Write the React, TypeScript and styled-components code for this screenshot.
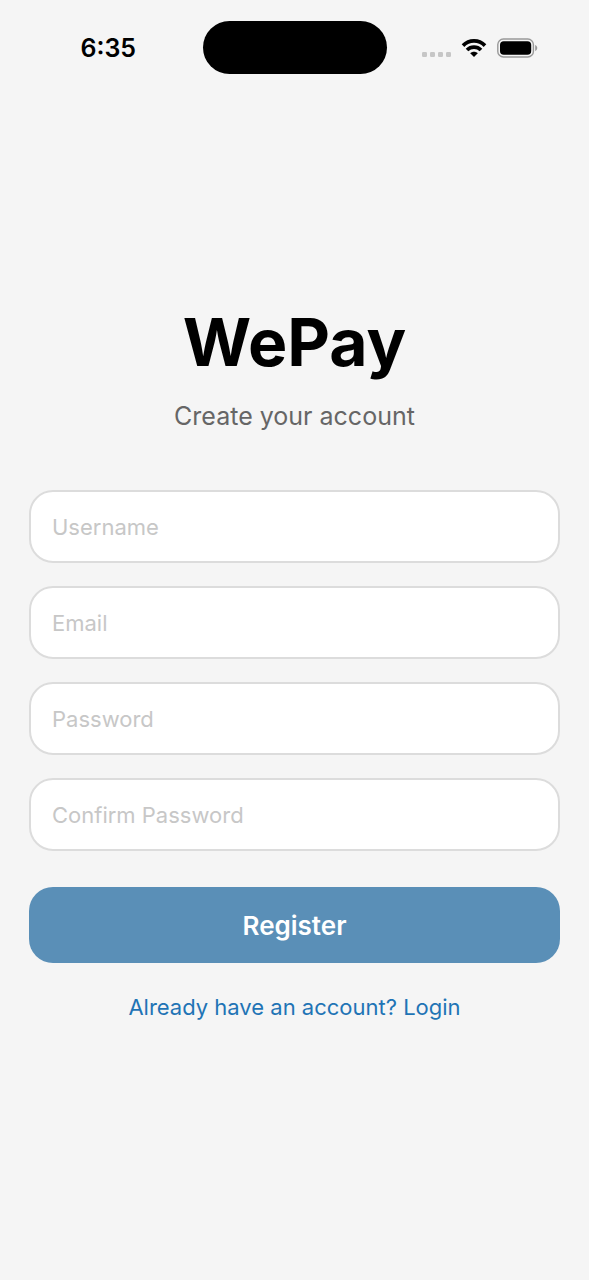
import React from 'react';
import styled, { createGlobalStyle } from 'styled-components';

const GlobalStyle = createGlobalStyle`
  *, *::before, *::after { box-sizing: border-box; }
  body {
    margin: 0;
    background: #f5f5f5;
    font-family: Inter, "Liberation Sans", sans-serif;
  }
`;

const Screen = styled.div`
  min-height: 100vh;
  display: flex;
  flex-direction: column;
  background: #f5f5f5;
`;

const StatusBar = styled.header`
  display: grid;
  grid-template-columns: 1fr 184px 1fr;
  align-items: center;
  padding-top: 21px;
`;

const Clock = styled.time`
  padding-left: 14px;
  text-align: center;
  font-size: 25px;
  line-height: 30px;
  font-weight: 600;
  color: #000;
`;

const Island = styled.div`
  height: 53px;
  border-radius: 27px;
  background: #000;
`;

const StatusIcons = styled.div`
  display: flex;
  align-items: center;
  justify-content: center;
  gap: 10px;
  padding-right: 16px;
`;

const Main = styled.main`
  flex: 1;
  display: flex;
  flex-direction: column;
  justify-content: center;
  padding: 0 29px 31px;
`;

const Title = styled.h1`
  margin: 0;
  text-align: center;
  font-size: 66px;
  line-height: 80px;
  font-weight: 700;
  color: #000;
`;

const Subtitle = styled.p`
  margin: 18px 0 58px;
  text-align: center;
  font-size: 25px;
  line-height: 32px;
  color: #666;
`;

const Form = styled.form`
  display: flex;
  flex-direction: column;
  gap: 23px;
`;

const Field = styled.input`
  width: 100%;
  height: 73px;
  padding: 0 21px;
  border: 2px solid #dcdcdc;
  border-radius: 24px;
  background: #fff;
  font-family: inherit;
  font-size: 22px;
  color: #000;

  &::placeholder {
    color: #c7c7c7;
    opacity: 1;
  }
`;

const SubmitButton = styled.button`
  height: 76px;
  margin-top: 13px;
  border: 0;
  border-radius: 24px;
  background: #5a8fb7;
  color: #fff;
  font-family: inherit;
  font-size: 26px;
  font-weight: 600;
  cursor: pointer;
`;

const LoginLink = styled.a`
  align-self: center;
  margin-top: 30px;
  font-size: 22px;
  line-height: 28px;
  color: #1f74b5;
  text-decoration: none;
`;

const CellularDots = () => (
  <svg width="30" height="20" viewBox="0 0 30 20" aria-hidden="true">
    {[1, 9, 17, 25].map((x) => (
      <rect key={x} x={x} y="14" width="5" height="5" rx="1.3" fill="#c6c6c6" />
    ))}
  </svg>
);

const Wifi = () => (
  <svg width="26" height="20" viewBox="0 0 26 20" aria-hidden="true">
    <g fill="none" stroke="#000" strokeWidth="3.7">
      <path d="M2 7.6 C8.2 1.4 17.8 1.4 24 7.6" />
      <path d="M6 12 C10 8.1 16 8.1 20 12" />
    </g>
    <path d="M9.2 15.2 C11.4 13.2 14.6 13.2 16.8 15.2 L13 19 Z" fill="#000" />
  </svg>
);

const Battery = () => (
  <svg width="41" height="20" viewBox="0 0 41 20" aria-hidden="true">
    <rect x="0.8" y="1" width="35.6" height="18" rx="5.6" fill="none" stroke="#999" strokeWidth="1.4" />
    <rect x="3" y="3.2" width="31.2" height="13.6" rx="3.8" fill="#000" />
    <path d="M38.2 7 C40.9 8.1 40.9 11.9 38.2 13 Z" fill="#999" />
  </svg>
);

const fields = [
  { name: 'username', label: 'Username', type: 'text' },
  { name: 'email', label: 'Email', type: 'email' },
  { name: 'password', label: 'Password', type: 'password' },
  { name: 'confirmPassword', label: 'Confirm Password', type: 'password' },
];

export default function App() {
  return (
    <>
      <GlobalStyle />
      <Screen>
        <StatusBar>
          <Clock>6:35</Clock>
          <Island />
          <StatusIcons>
            <CellularDots />
            <Wifi />
            <Battery />
          </StatusIcons>
        </StatusBar>
        <Main>
          <Title>WePay</Title>
          <Subtitle>Create your account</Subtitle>
          <Form onSubmit={(event: React.FormEvent) => event.preventDefault()}>
            {fields.map(({ name, label, type }) => (
              <Field key={name} name={name} type={type} placeholder={label} aria-label={label} />
            ))}
            <SubmitButton type="submit">Register</SubmitButton>
          </Form>
          <LoginLink href="#login">Already have an account? Login</LoginLink>
        </Main>
      </Screen>
    </>
  );
}
